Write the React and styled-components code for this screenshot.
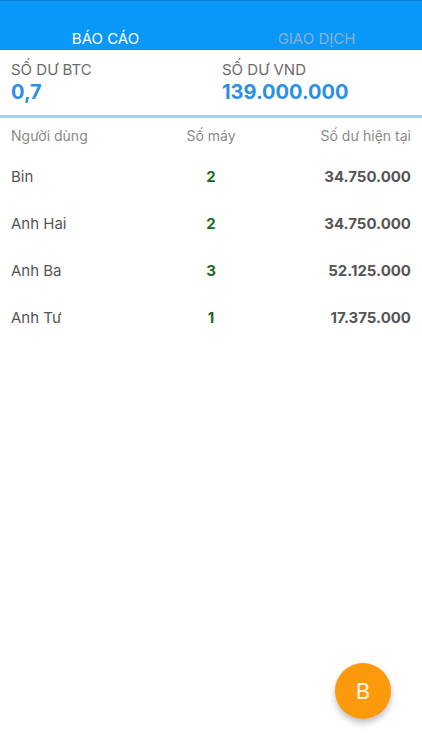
import React from "react";
import styled, { createGlobalStyle } from "styled-components";

const Global = createGlobalStyle`
  html, body { margin: 0; padding: 0; background: #fff; }
  body { font-family: "Inter", "Roboto", "Liberation Sans", sans-serif; }
  * { box-sizing: border-box; }
`;

const Screen = styled.div`
  position: relative;
  width: 422px;
  height: 750px;
  background: #fff;
  overflow: hidden;
`;

const TabBar = styled.div`
  display: flex;
  height: 50px;
  background: #0a97fa;
  border-top: 1px solid #0a7fd6;
`;

const Tab = styled.div`
  flex: 1;
  display: flex;
  align-items: flex-end;
  justify-content: center;
  padding-bottom: 2px;
  font-size: 15px;
  color: ${(p) => (p.$active ? "#ffffff" : "#8fb0c8")};
`;

const Summary = styled.div`
  display: flex;
  height: 68px;
  border-bottom: 3px solid #a3cff2;
`;

const SummaryCell = styled.div`
  flex: 1;
  padding: 10px 11px 0;
  display: flex;
  flex-direction: column;
`;

const SummaryLabel = styled.div`
  font-size: 15px;
  color: #6b6b6b;
  line-height: 20px;
`;

const SummaryValue = styled.div`
  font-size: 20px;
  font-weight: 700;
  color: #2b8fe3;
  line-height: 25px;
`;

const Table = styled.div`
  display: flex;
  flex-direction: column;
  padding: 6px 11px 0;
`;

const Row = styled.div`
  display: grid;
  grid-template-columns: 1fr 1fr 1fr;
  align-items: center;
  height: ${(p) => (p.$head ? "22px" : "47px")};
  margin-bottom: ${(p) => (p.$head ? "7px" : "0")};
`;

const Cell = styled.div`
  text-align: ${(p) => p.$align || "left"};
  font-size: ${(p) => (p.$head ? "14px" : "15px")};
  color: ${(p) => p.$color || (p.$head ? "#8a8a8a" : "#555555")};
  font-weight: ${(p) => (p.$bold ? 700 : 400)};
`;

const Fab = styled.div`
  position: absolute;
  right: 31px;
  bottom: 31px;
  width: 56px;
  height: 56px;
  border-radius: 50%;
  background: #fd9a0c;
  color: #fff6e8;
  display: flex;
  align-items: center;
  justify-content: center;
  font-size: 22px;
  box-shadow: 0 4px 6px rgba(0, 0, 0, 0.25);
`;

const rows = [
  { name: "Bin", count: 2, balance: "34.750.000" },
  { name: "Anh Hai", count: 2, balance: "34.750.000" },
  { name: "Anh Ba", count: 3, balance: "52.125.000" },
  { name: "Anh Tư", count: 1, balance: "17.375.000" },
];

export default function App() {
  return (
    <Screen>
      <Global />
      <TabBar>
        <Tab $active>BÁO CÁO</Tab>
        <Tab>GIAO DỊCH</Tab>
      </TabBar>
      <Summary>
        <SummaryCell>
          <SummaryLabel>SỐ DƯ BTC</SummaryLabel>
          <SummaryValue>0,7</SummaryValue>
        </SummaryCell>
        <SummaryCell>
          <SummaryLabel>SỐ DƯ VND</SummaryLabel>
          <SummaryValue>139.000.000</SummaryValue>
        </SummaryCell>
      </Summary>
      <Table>
        <Row $head>
          <Cell $head>Người dùng</Cell>
          <Cell $head $align="center">Số máy</Cell>
          <Cell $head $align="right">Số dư hiện tại</Cell>
        </Row>
        {rows.map((r) => (
          <Row key={r.name}>
            <Cell>{r.name}</Cell>
            <Cell $align="center" $bold $color="#1d6a1d">{r.count}</Cell>
            <Cell $align="right" $bold>{r.balance}</Cell>
          </Row>
        ))}
      </Table>
      <Fab>B</Fab>
    </Screen>
  );
}
